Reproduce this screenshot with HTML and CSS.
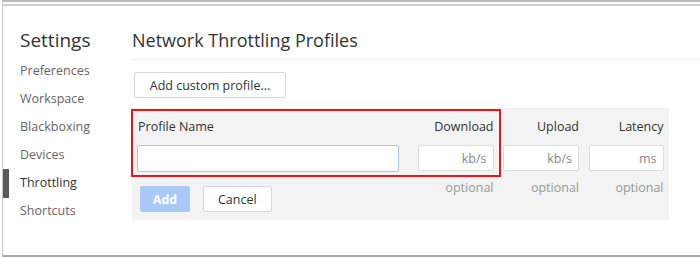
FILE: index.html
```html
<!DOCTYPE html>
<html lang="en">
  <head>
    <meta charset="UTF-8" />
    <title>Settings - Throttling</title>
    <link rel="stylesheet" href="styles.css">
  </head>
  <body>
    <div class="window">
      <div class="sidebar">
        <h1>Settings</h1>
        <ul class="nav">
          <li>Preferences</li>
          <li>Workspace</li>
          <li>Blackboxing</li>
          <li>Devices</li>
          <li class="selected">Throttling</li>
          <li>Shortcuts</li>
        </ul>
      </div>
      <div class="main">
        <h2>Network Throttling Profiles</h2>
        <button class="btn add-profile">Add custom profile...</button>
        <div class="editor">
          <div class="highlight"></div>
          <div class="label name-col">Profile Name</div>
          <div class="label">Download</div>
          <div class="label">Upload</div>
          <div class="label">Latency</div>

          <input class="field name-field" type="text" />
          <input class="field" type="text" placeholder="kb/s" />
          <input class="field" type="text" placeholder="kb/s" />
          <input class="field" type="text" placeholder="ms" />

          <div class="actions">
            <button class="btn primary" disabled>Add</button>
            <button class="btn">Cancel</button>
          </div>
          <div class="hint">optional</div>
          <div class="hint">optional</div>
          <div class="hint">optional</div>
        </div>
      </div>
    </div>
  </body>
</html>
```

FILE: styles.css
```css
body {
  margin: 0;
  font-family: 'Open Sans', 'Noto Sans', sans-serif;
  background: #fff;
}
.window {
  margin-left: 2px;
  height: 253px;
  background: #fff;
  border-top: 2px solid #b9b9b9;
  border-left: 1px solid #c8c8c8;
  border-bottom: 2px solid #a8a8a8;
  box-shadow: inset 0 2px 0 #fff, inset 0 4px 0 #cfcfcf;
  display: flex;
}
.sidebar {
  width: 129px;
  flex-shrink: 0;
}
.sidebar h1 {
  margin: 25px 0 0 17px;
  font-size: 19px;
  font-weight: normal;
  color: #333;
  line-height: 26px;
}
.nav {
  list-style: none;
  margin: 4px 0 0;
  padding: 0;
}
.nav li {
  position: relative;
  height: 28px;
  line-height: 28px;
  padding-left: 17px;
  font-size: 12.5px;
  color: #666;
}
.nav li.selected {
  color: #333;
}
.nav li.selected::before {
  content: '';
  position: absolute;
  left: 0;
  top: 0;
  width: 6px;
  height: 29px;
  background: #5a5a5a;
}
.main {
  flex: 1;
}
.main h2 {
  margin: 27px 0 0;
  padding-bottom: 8px;
  font-size: 18px;
  font-weight: normal;
  color: #333;
  line-height: 22px;
  border-bottom: 1px solid #eee;
}
.btn {
  font-family: inherit;
  font-size: 12.5px;
  color: #333;
  background: #fff;
  border: 1px solid #d6d6d6;
  border-radius: 2px;
  height: 26px;
  padding: 0 14px;
}
.add-profile {
  margin: 12px 0 10px 2px;
  width: 152px;
  height: 26px;
}
.editor {
  position: relative;
  width: 524px;
  background: #f3f3f3;
  border-top: 1px solid #eee;
  padding: 9px 8px 8px 5px;
  display: grid;
  grid-template-columns: 271px 76px 76px 75px;
  column-gap: 9.5px;
}
.editor .label {
  font-size: 12.5px;
  color: #333;
  text-align: right;
  line-height: 17px;
}
.editor .label.name-col {
  text-align: left;
  padding-left: 1px;
}
.field {
  box-sizing: border-box;
  margin-top: 10px;
  height: 26px;
  width: 100%;
  border: 1px solid #dcdcdc;
  border-radius: 2px;
  background: #fff;
  font-family: inherit;
  font-size: 12.5px;
  text-align: right;
  padding: 0 6px;
}
.field::placeholder {
  color: #888;
}
.name-field {
  width: 262px;
  border-color: #a9c6ef;
  border-width: 1.5px;
  height: 27px;
  text-align: left;
}
.actions {
  display: flex;
  gap: 13px;
  padding: 14px 0 0 3px;
}
.actions .btn {
  height: 26px;
}
.btn.primary {
  background: #abc9f6;
  border-color: #abc9f6;
  color: #fff;
  font-weight: bold;
  width: 50px;
  padding: 0;
}
.hint {
  font-size: 12.5px;
  color: #999;
  text-align: right;
  padding-top: 7px;
}
.highlight {
  position: absolute;
  left: -1px;
  top: 0;
  width: 366px;
  height: 64px;
  border: 2px solid #e8151b;
  pointer-events: none;
}
```
